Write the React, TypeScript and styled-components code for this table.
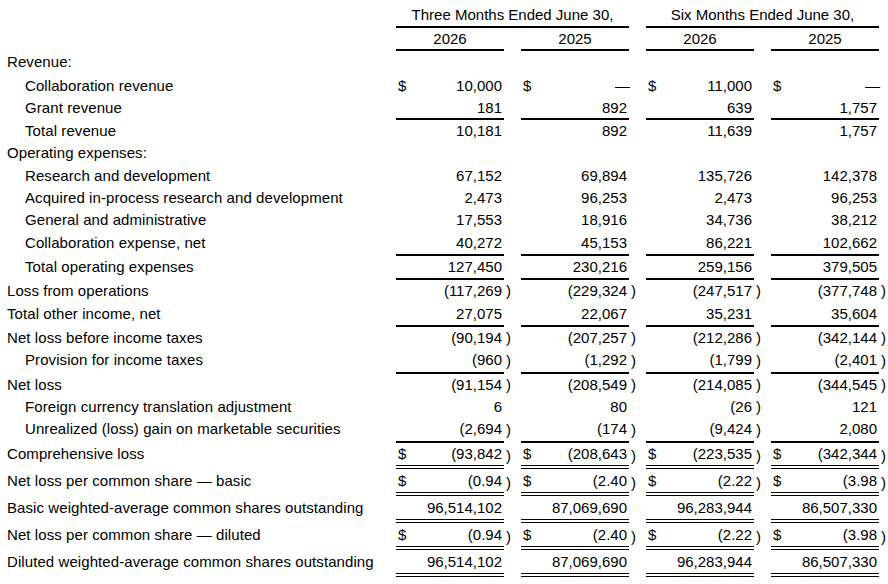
import React from 'react';
import styled, { createGlobalStyle } from 'styled-components';

const Global = createGlobalStyle`
  html, body { margin: 0; padding: 0; background: #ffffff; }
  body {
    font-family: "Liberation Sans", Arial, sans-serif;
    font-size: 15px;
    color: #000000;
  }
`;

type Rule = 'none' | 'single' | 'double';

const GRID = '396px 108px 17px 108px 17px 108px 17px 108px 9px';

const borderWidth = (r: Rule) => (r === 'single' ? 2 : r === 'double' ? 4 : 0);
const borderCss = (r: Rule, visible: boolean) =>
  r === 'none'
    ? 'border-bottom: 0;'
    : `border-bottom: ${r === 'single' ? '2px solid' : '4px double'} ${visible ? '#000' : 'transparent'};`;

const Sheet = styled.div`
  width: 888px;
  padding-top: 4px;
`;

const Row = styled.div`
  display: grid;
  grid-template-columns: ${GRID};
  white-space: nowrap;
`;

const HeadCell = styled.div<{ $span: number; $h: number }>`
  grid-column: span ${(p) => p.$span};
  text-align: center;
  line-height: ${(p) => p.$h}px;
  border-bottom: 2px solid #000;
`;

const Spacer = styled.div<{ $span?: number }>`
  grid-column: span ${(p) => p.$span ?? 1};
`;

const Label = styled.div<{ $indent: boolean; $h: number; $rule: Rule }>`
  padding-left: ${(p) => (p.$indent ? 25 : 7)}px;
  line-height: ${(p) => p.$h}px;
  letter-spacing: 0.08px;
  ${(p) => borderCss(p.$rule, false)}
`;

const Value = styled.div<{ $h: number; $rule: Rule }>`
  display: flex;
  justify-content: space-between;
  padding: 0 2px;
  line-height: ${(p) => p.$h}px;
  ${(p) => borderCss(p.$rule, p.$rule !== 'none')}
`;

const Amount = styled.span<{ $dash?: boolean }>`
  margin-left: auto;
  margin-right: ${(p) => (p.$dash ? '-3px' : '0')};
`;

const Paren = styled.div<{ $h: number }>`
  padding-left: 2px;
  line-height: ${(p) => p.$h}px;
`;

type Line = {
  label: string;
  indent?: boolean;
  values?: string[];
  dollar?: boolean;
  rule?: Rule;
  h?: number;
};

const lines: Line[] = [
  { label: 'Revenue:', h: 22.5 },
  { label: 'Collaboration revenue', indent: true, dollar: true, values: ['10,000', '—', '11,000', '—'], h: 23.5 },
  { label: 'Grant revenue', indent: true, values: ['181', '892', '639', '1,757'], rule: 'single', h: 21 },
  { label: 'Total revenue', indent: true, values: ['10,181', '892', '11,639', '1,757'] },
  { label: 'Operating expenses:' },
  { label: 'Research and development', indent: true, values: ['67,152', '69,894', '135,726', '142,378'] },
  { label: 'Acquired in-process research and development', indent: true, values: ['2,473', '96,253', '2,473', '96,253'] },
  { label: 'General and administrative', indent: true, values: ['17,553', '18,916', '34,736', '38,212'] },
  { label: 'Collaboration expense, net', indent: true, values: ['40,272', '45,153', '86,221', '102,662'], rule: 'single' },
  { label: 'Total operating expenses', indent: true, values: ['127,450', '230,216', '259,156', '379,505'], rule: 'single' },
  { label: 'Loss from operations', values: ['(117,269)', '(229,324)', '(247,517)', '(377,748)'] },
  { label: 'Total other income, net', values: ['27,075', '22,067', '35,231', '35,604'], rule: 'single' },
  { label: 'Net loss before income taxes', values: ['(90,194)', '(207,257)', '(212,286)', '(342,144)'] },
  { label: 'Provision for income taxes', indent: true, values: ['(960)', '(1,292)', '(1,799)', '(2,401)'], rule: 'single' },
  { label: 'Net loss', values: ['(91,154)', '(208,549)', '(214,085)', '(344,545)'] },
  { label: 'Foreign currency translation adjustment', indent: true, values: ['6', '80', '(26)', '121'] },
  { label: 'Unrealized (loss) gain on marketable securities', indent: true, values: ['(2,694)', '(174)', '(9,424)', '2,080'], rule: 'single' },
  { label: 'Comprehensive loss', dollar: true, values: ['(93,842)', '(208,643)', '(223,535)', '(342,344)'], rule: 'double' },
  { label: 'Net loss per common share — basic', dollar: true, values: ['(0.94)', '(2.40)', '(2.22)', '(3.98)'], rule: 'double', h: 23 },
  { label: 'Basic weighted-average common shares outstanding', values: ['96,514,102', '87,069,690', '96,283,944', '86,507,330'], rule: 'double', h: 23 },
  { label: 'Net loss per common share — diluted', dollar: true, values: ['(0.94)', '(2.40)', '(2.22)', '(3.98)'], rule: 'double', h: 23 },
  { label: 'Diluted weighted-average common shares outstanding', values: ['96,514,102', '87,069,690', '96,283,944', '86,507,330'], rule: 'double', h: 23 },
];

const DataRow: React.FC<{ line: Line }> = ({ line }) => {
  const rule: Rule = line.rule ?? 'none';
  const h = line.h ?? 22.33;
  const full = h + borderWidth(rule);
  const vals = line.values;
  return (
    <Row>
      <Label $indent={!!line.indent} $h={h} $rule={rule}>
        {line.label}
      </Label>
      {vals
        ? vals.map((v, i) => {
            const neg = v.endsWith(')');
            const text = neg ? v.slice(0, -1) : v;
            return (
              <React.Fragment key={i}>
                <Value $h={h} $rule={rule}>
                  {line.dollar && <span>$</span>}
                  <Amount $dash={text === '—'}>{text}</Amount>
                </Value>
                <Paren $h={full}>{neg ? ')' : ''}</Paren>
              </React.Fragment>
            );
          })
        : <Spacer $span={8} />}
    </Row>
  );
};

export default function App() {
  return (
    <>
      <Global />
      <Sheet>
        <Row>
          <Spacer />
          <HeadCell $span={3} $h={22}>Three Months Ended June 30,</HeadCell>
          <Spacer />
          <HeadCell $span={3} $h={22}>Six Months Ended June 30,</HeadCell>
          <Spacer />
        </Row>
        <Row>
          <Spacer />
          <HeadCell $span={1} $h={21}>2026</HeadCell>
          <Spacer />
          <HeadCell $span={1} $h={21}>2025</HeadCell>
          <Spacer />
          <HeadCell $span={1} $h={21}>2026</HeadCell>
          <Spacer />
          <HeadCell $span={1} $h={21}>2025</HeadCell>
          <Spacer />
        </Row>
        {lines.map((l, i) => (
          <DataRow key={i} line={l} />
        ))}
      </Sheet>
    </>
  );
}
